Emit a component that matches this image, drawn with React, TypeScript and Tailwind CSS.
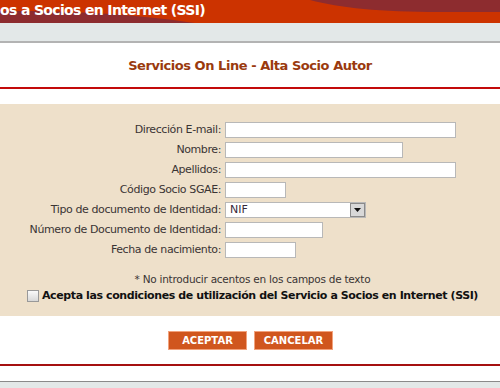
import React from "react";

const font = { fontFamily: '"DejaVu Sans", Verdana, sans-serif' };

function Label({ children }: { children: React.ReactNode }) {
  return (
    <div className="flex h-[20px] items-center justify-end pr-[4px] text-[11px] tracking-[-0.4px] text-[#3a3434]">
      {children}
    </div>
  );
}

function Field({ label, width }: { label: string; width: number }) {
  return (
    <>
      <Label>{label}</Label>
      <div className="flex h-[20px] items-center">
        <div className="h-[16px] border border-[#b8b8b8] bg-white" style={{ width }} />
      </div>
    </>
  );
}

export default function App() {
  return (
    <div className="relative h-[388px] w-[500px] overflow-hidden bg-white" style={font}>
      <div className="relative h-[23px] w-full overflow-hidden bg-[#cc3300]">
        <svg className="absolute inset-0" width="500" height="23" viewBox="0 0 500 23">
          <path d="M0 11 C 80 10 150 16 195 23 L0 23 Z" fill="#8d2c2f" />
          <path d="M310 0 C 340 8 380 12 440 12 L500 12 L500 0 Z" fill="#8d2c2f" />
        </svg>
        <div className="relative pt-[2px] text-[14px] font-bold leading-[17px] tracking-[-0.65px] text-white whitespace-nowrap">
          os a Socios en Internet (SSI)
        </div>
      </div>
      <div className="h-[18px] bg-[#e3e8e8]" />
      <div className="h-[2px] bg-[#b3b3b3]" />
      <div className="flex h-[44px] items-center justify-center pt-[2px] text-[13px] font-bold tracking-[-0.45px] text-[#9a3a0e]">
        Servicios On Line - Alta Socio Autor
      </div>
      <div className="h-[2px] bg-[#c30a0a]" />
      <div className="h-[15px]" />
      <div className="h-[212px] bg-[#eee0ca] pt-[16px]">
        <div className="grid grid-cols-[225px_1fr]">
          <Field label="Dirección E-mail:" width={231} />
          <Field label="Nombre:" width={178} />
          <Field label="Apellidos:" width={231} />
          <Field label="Código Socio SGAE:" width={61} />
          <Label>Tipo de documento de Identidad:</Label>
          <div className="flex h-[20px] items-center">
            <div className="flex h-[16px] w-[141px] items-center border border-[#b8b8b8] bg-white">
              <span className="flex-1 pl-[4px] text-[11px] text-[#3a2a3a]">NIF</span>
              <div className="flex h-[14px] w-[15px] items-center justify-center border border-[#8a8a8a] bg-[#d8d8d8]">
                <svg width="7" height="4" viewBox="0 0 7 4"><path d="M0 0 L7 0 L3.5 4 Z" fill="#111" /></svg>
              </div>
            </div>
          </div>
          <Field label="Número de Documento de Identidad:" width={98} />
          <Field label="Fecha de nacimiento:" width={71} />
        </div>
        <div className="mt-[12px] pl-[5px] text-center text-[10.5px] leading-[14px] tracking-[-0.25px] text-[#3a3434]">
          * No introducir acentos en los campos de texto
        </div>
        <div className="mt-[3px] flex items-center pl-[27px]">
          <div className="h-[12px] w-[12px] border border-[#999] bg-gradient-to-b from-[#fafafa] to-[#d8d8d8]" />
          <span className="ml-[3px] whitespace-nowrap text-[11px] font-bold leading-[14px] tracking-[-0.4px] text-[#111]">
            Acepta las condiciones de utilización del Servicio a Socios en Internet (SSI)
          </span>
        </div>
      </div>
      <div className="flex h-[48px] items-center justify-center gap-[7px] pl-[1px]">
        <div className="flex h-[19px] w-[79px] items-center justify-center border border-[#f2a27c] bg-[#d0561e] text-[10px] font-bold text-white">ACEPTAR</div>
        <div className="flex h-[19px] w-[79px] items-center justify-center border border-[#f2a27c] bg-[#d0561e] text-[10px] font-bold text-white">CANCELAR</div>
      </div>
      <div className="h-[2px] bg-[#a51010]" />
      <div className="h-[15px]" />
      <div className="h-[1px] bg-[#8a8a8a]" />
      <div className="h-[10px] bg-[#e3e8e8]" />
    </div>
  );
}
